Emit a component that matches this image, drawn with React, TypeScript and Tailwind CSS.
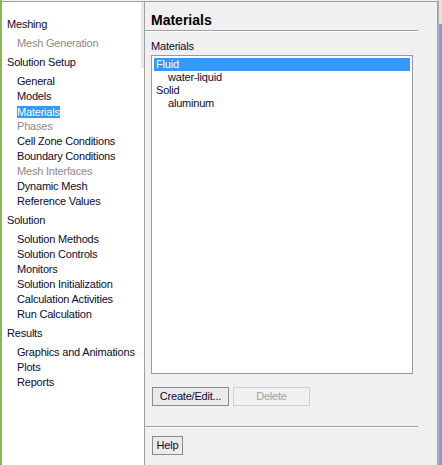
import React from 'react'

type NavItem = { label: string; disabled?: boolean; selected?: boolean }
type NavGroup = { title: string; items: NavItem[] }

const groups: NavGroup[] = [
    { title: 'Meshing', items: [{ label: 'Mesh Generation', disabled: true }] },
    {
        title: 'Solution Setup',
        items: [
            { label: 'General' },
            { label: 'Models' },
            { label: 'Materials', selected: true },
            { label: 'Phases', disabled: true },
            { label: 'Cell Zone Conditions' },
            { label: 'Boundary Conditions' },
            { label: 'Mesh Interfaces', disabled: true },
            { label: 'Dynamic Mesh' },
            { label: 'Reference Values' },
        ],
    },
    {
        title: 'Solution',
        items: [
            { label: 'Solution Methods' },
            { label: 'Solution Controls' },
            { label: 'Monitors' },
            { label: 'Solution Initialization' },
            { label: 'Calculation Activities' },
            { label: 'Run Calculation' },
        ],
    },
    {
        title: 'Results',
        items: [{ label: 'Graphics and Animations' }, { label: 'Plots' }, { label: 'Reports' }],
    },
]

const materials = [
    { label: 'Fluid', indent: false, selected: true },
    { label: 'water-liquid', indent: true },
    { label: 'Solid', indent: false },
    { label: 'aluminum', indent: true },
]

const NavTree = () => {
    return (
        <div className='flex-1 bg-white pt-[15px] flex flex-col gap-[4px]'>
            {groups.map((group) => (
                <div key={group.title} className='flex flex-col'>
                    <div className='h-[15px] leading-[15px] pl-[5px] mb-[4px] text-[#0a0a32]'>{group.title}</div>
                    {group.items.map((item) => (
                        <div key={item.label} className='h-[15px] flex items-center pl-[15px]'>
                            {item.selected ? (
                                <span className='h-[12px] leading-[12px] bg-[#3399ff] text-white'>{item.label}</span>
                            ) : (
                                <span className={`leading-[15px] ${item.disabled ? 'text-[#8a8a8a]' : 'text-[#0a0a32]'}`}>{item.label}</span>
                            )}
                        </div>
                    ))}
                </div>
            ))}
        </div>
    )
}

const MaterialsPanel = () => {
    return (
        <div className='w-[292px] flex flex-col bg-[#f0f0f0] text-[#0a0a32]'>
            <div className='h-[28px] pt-[10px] pl-[6px] text-[14px] leading-[16px] font-bold text-black tracking-normal'>Materials</div>
            <div className='w-[273px] h-[2px] bg-white border-t border-[#a0a0a0]'></div>

            <div className='mt-[8px] pl-[6px] leading-[13px]'>Materials</div>
            <div className='ml-[6px] mt-[2px] w-[262px] h-[319px] bg-white border border-[#9a9a9a] p-px'>
                <div className='h-full border border-white'>
                    {materials.map((m) => (
                        <div
                            key={m.label}
                            className={`h-[13px] leading-[13px] ${m.indent ? 'pl-[14px]' : 'pl-[2px]'} ${m.selected ? 'bg-[#3399ff] text-white' : ''}`}
                        >
                            {m.label}
                        </div>
                    ))}
                </div>
            </div>

            <div className='flex gap-[4px] ml-[7px] mt-[13px]'>
                <button className='w-[77px] h-[19px] border border-[#8a8a8a] bg-[#ebebeb] text-[#0a0a32] leading-[17px]'>Create/Edit...</button>
                <button disabled className='w-[77px] h-[19px] border border-[#cfcfcf] bg-[#f0f0f0] text-[#a3a3a3] leading-[17px]'>Delete</button>
            </div>

            <div className='mt-[20px] w-[273px] h-[2px] bg-white border-t border-[#a0a0a0]'></div>

            <div className='ml-[7px] mt-[8px]'>
                <button className='w-[31px] h-[19px] border border-[#8a8a8a] bg-[#ebebeb] text-[#0a0a32] leading-[17px]'>Help</button>
            </div>
        </div>
    )
}

export default function App() {
    return (
        <div className="w-[442px] h-[465px] flex bg-[#f0f0f0] overflow-hidden font-['Liberation_Sans',Arial,sans-serif] text-[11px] tracking-[-0.2px]">
            <div className='w-[2px] bg-[#8cb45a]'></div>

            <div className='flex-1 flex flex-col'>
                <div className='h-[2px] bg-[#f0f0f0] border-b border-[#a0a0a0]'></div>
                <div className='flex-1 flex'>
                    <div className='w-[142px] flex'>
                        <NavTree />
                        <div className='w-[3px] flex flex-col bg-white'>
                            <div className='h-[66px] bg-[#e8e8e8]'></div>
                        </div>
                    </div>
                    <div className='w-px bg-[#a0a0a0]'></div>
                    <MaterialsPanel />
                    <div className='w-px bg-[#a0a0a0]'></div>
                </div>
            </div>

            <div className='w-[4px] flex border-l border-[#b4b4b4]'>
                <div className='flex-1 flex flex-col'>
                    <div className='h-[24px] bg-[#e2e2e2]'></div>
                    <div className='flex-1 bg-[#7c9be0]'></div>
                </div>
            </div>
        </div>
    )
}
